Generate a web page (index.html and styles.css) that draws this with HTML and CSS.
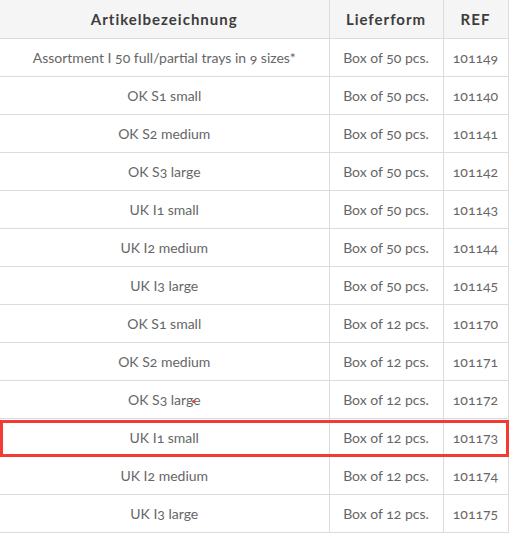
FILE: index.html
```html
<!DOCTYPE html>
<html>
<head>
<meta charset="utf-8">
<link rel="stylesheet" href="styles.css">
</head>
<body>
<div class="wrap">
<table class="products">
  <colgroup><col class="c1"><col class="c2"><col class="c3"></colgroup>
  <thead>
    <tr><th>Artikelbezeichnung</th><th>Lieferform</th><th>REF</th></tr>
  </thead>
  <tbody>
    <tr><td>Assortment I 50 full/partial trays in 9 sizes*</td><td>Box of 50 pcs.</td><td>101149</td></tr>
    <tr><td>OK S1 small</td><td>Box of 50 pcs.</td><td>101140</td></tr>
    <tr><td>OK S2 medium</td><td>Box of 50 pcs.</td><td>101141</td></tr>
    <tr><td>OK S3 large</td><td>Box of 50 pcs.</td><td>101142</td></tr>
    <tr><td>UK I1 small</td><td>Box of 50 pcs.</td><td>101143</td></tr>
    <tr><td>UK I2 medium</td><td>Box of 50 pcs.</td><td>101144</td></tr>
    <tr><td>UK I3 large</td><td>Box of 50 pcs.</td><td>101145</td></tr>
    <tr><td>OK S1 small</td><td>Box of 12 pcs.</td><td>101170</td></tr>
    <tr><td>OK S2 medium</td><td>Box of 12 pcs.</td><td>101171</td></tr>
    <tr><td>OK S3 large</td><td>Box of 12 pcs.</td><td>101172</td></tr>
    <tr><td>UK I1 small</td><td>Box of 12 pcs.</td><td>101173</td></tr>
    <tr><td>UK I2 medium</td><td>Box of 12 pcs.</td><td>101174</td></tr>
    <tr><td>UK I3 large</td><td>Box of 12 pcs.</td><td>101175</td></tr>
  </tbody>
</table>
<div class="highlight"></div>
<div class="dot"></div>
</div>
</body>
</html>
```
FILE: styles.css
```css
html, body { margin: 0; padding: 0; background: #fff; }
.wrap { position: relative; width: 510px; }
.products {
  border-collapse: collapse;
  width: 508px;
  table-layout: fixed;
  font-family: "Lato", "Open Sans", sans-serif;
  font-variant-numeric: oldstyle-nums;
  font-size: 14px;
  color: #666;
}
.c1 { width: 329px; }
.c2 { width: 114px; }
.c3 { width: 65px; }
.products th, .products td {
  border: 1px solid #dcdcdc;
  text-align: center;
  padding: 0;
  height: 37px;
  white-space: nowrap;
}
.products tr > :first-child { border-left: none; }
.products thead th {
  background: #f5f5f5;
  color: #3d3d3d;
  font-size: 15px;
  font-weight: 700;
  letter-spacing: 1px;
  height: 38px;
  border-top: none;
}
.dot {
  position: absolute;
  left: 192px;
  top: 400px;
  width: 3px;
  height: 3px;
  background: #e42;
  border-radius: 50%;
}
.highlight {
  position: absolute;
  left: 0;
  top: 420px;
  width: 503px;
  height: 31px;
  border: 3px solid #f43a35;
}
```
